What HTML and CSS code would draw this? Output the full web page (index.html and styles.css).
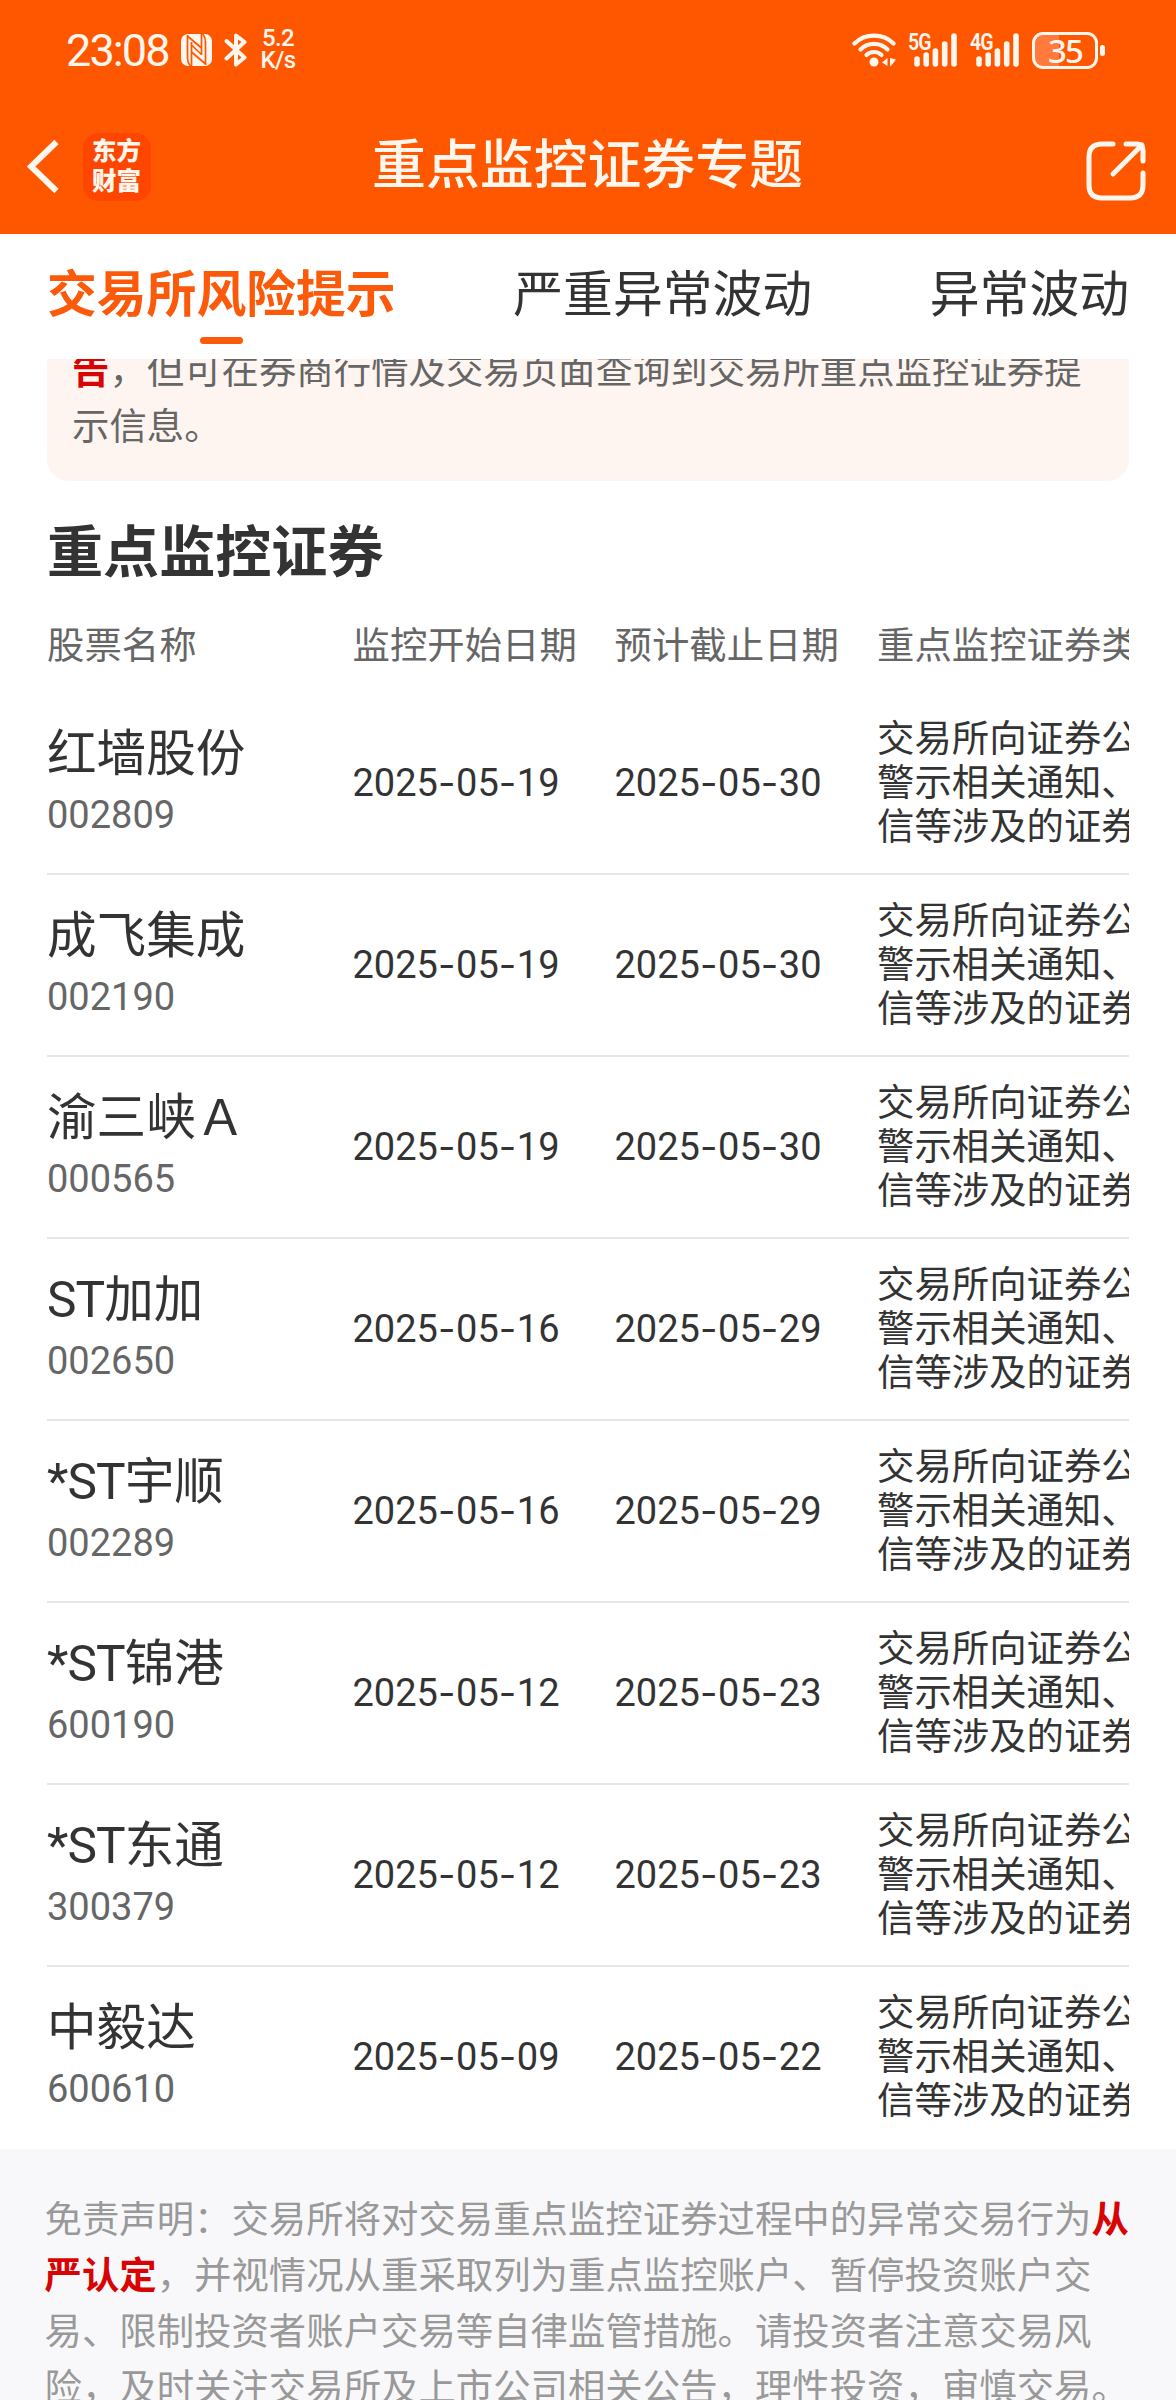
FILE: index.html
```html
<!DOCTYPE html>
<html lang="zh-CN">
<head>
<meta charset="utf-8">
<title>重点监控证券专题</title>
<link rel="stylesheet" href="styles.css">
</head>
<body>
<div class="screen">
  <header class="top">
    <div class="status">
      <span class="clock">23:08</span>
      <svg class="nfc" width="31" height="34" viewBox="0 0 31 34"><rect x="0" y="1" width="31" height="32" rx="7" fill="#fff7ee"/><path d="M6.500 2V25Q6.500 30 10 34M24.500 32V9Q24.500 4 21 0M10.500 9V33M20.500 1V22M7 3.500L20.500 15M10.500 12L20.500 21.500M10.500 19L24 30.500" stroke="#ff5600" stroke-width="1.700" fill="none"/></svg>
      <svg class="bt" width="24" height="36" viewBox="0 0 24 36"><path d="M2.500 9L20.500 25.500L12 32.500V22M12 14V3.500L20.500 10L2.500 26.500" fill="none" stroke="#fff7ee" stroke-width="4" stroke-linejoin="round" stroke-linecap="round"/></svg>
      <span class="speed"><span>5.2</span><span>K/s</span></span>
      <span class="gap"></span>
      <svg class="wifi" width="45" height="36" viewBox="0 0 45 36"><g fill="none" stroke="#fff7ee" stroke-width="4.200" stroke-linecap="round"><path d="M2.500 11.500C13 1 31 1 41.500 11.500"/><path d="M8.500 17.500C16 10 28 10 35.500 17.500"/><path d="M14.500 23C18.500 19 25.500 19 29.500 23"/></g><circle cx="22" cy="30" r="4.500" fill="#fff7ee"/><path d="M35.500 26v8l-5.500-3.500zM38 26l6 1.500-5 6.500h-1z" fill="#fff7ee"/></svg>
      <span class="signal"><span class="net">5G</span><svg width="44" height="36" viewBox="0 0 44 36"><path d="M3 27v5M12.200 23v9M21.400 19v13M30.700 12v20M40 4v28" stroke="#fff7ee" stroke-width="5.600" stroke-linecap="round"/></svg></span>
      <span class="signal second"><span class="net">4G</span><svg width="44" height="36" viewBox="0 0 44 36"><path d="M3 27v5M12.200 23v9M21.400 19v13M30.700 12v20M40 4v28" stroke="#fff7ee" stroke-width="5.600" stroke-linecap="round"/></svg></span>
      <span class="battery">35</span><span class="cap"></span>
    </div>
    <div class="nav">
      <svg class="back" width="32" height="56" viewBox="0 0 32 56"><path d="M29.500 3L4 27.500L29.500 52" fill="none" stroke="#fff7ee" stroke-width="6"/></svg>
      <span class="logo">东方<br>财富</span>
      <h1>重点监控证券专题</h1>
      <svg class="share" width="60" height="60" viewBox="0 0 60 60"><path d="M27 3H16Q3 3 3 16V44Q3 57 16 57H44Q57 57 57 44V32M40 3H51Q57 3 57 9V20M56 4L27 33" fill="none" stroke="#fff7ee" stroke-width="5" stroke-linecap="round"/></svg>
    </div>
  </header>
  <nav class="tabs">
    <span class="tab on">交易所风险提示</span><span class="tab">严重异常波动</span><span class="tab">异常波动</span>
  </nav>
  <div class="notice"><p><b>告</b>，但可在券商行情及交易页面查询到交易所重点监控证券提示信息。</p></div>
  <h2>重点监控证券</h2>
  <div class="table">
    <div class="row head"><span>股票名称</span><span>监控开始日期</span><span>预计截止日期</span><span>重点监控证券类型</span></div>
    <div class="row"><div class="stock"><span class="name">红墙股份</span><span class="code">002809</span></div><span class="date">2025<i>-</i>05<i>-</i>19</span><span class="date">2025<i>-</i>05<i>-</i>30</span><p class="kind">交易所向证券公司<br>警示相关通知、<br>信等涉及的证券</p></div>
    <div class="row"><div class="stock"><span class="name">成飞集成</span><span class="code">002190</span></div><span class="date">2025<i>-</i>05<i>-</i>19</span><span class="date">2025<i>-</i>05<i>-</i>30</span><p class="kind">交易所向证券公司<br>警示相关通知、<br>信等涉及的证券</p></div>
    <div class="row"><div class="stock"><span class="name">渝三峡Ａ</span><span class="code">000565</span></div><span class="date">2025<i>-</i>05<i>-</i>19</span><span class="date">2025<i>-</i>05<i>-</i>30</span><p class="kind">交易所向证券公司<br>警示相关通知、<br>信等涉及的证券</p></div>
    <div class="row"><div class="stock"><span class="name"><em>ST</em>加加</span><span class="code">002650</span></div><span class="date">2025<i>-</i>05<i>-</i>16</span><span class="date">2025<i>-</i>05<i>-</i>29</span><p class="kind">交易所向证券公司<br>警示相关通知、<br>信等涉及的证券</p></div>
    <div class="row"><div class="stock"><span class="name"><em>*ST</em>宇顺</span><span class="code">002289</span></div><span class="date">2025<i>-</i>05<i>-</i>16</span><span class="date">2025<i>-</i>05<i>-</i>29</span><p class="kind">交易所向证券公司<br>警示相关通知、<br>信等涉及的证券</p></div>
    <div class="row"><div class="stock"><span class="name"><em>*ST</em>锦港</span><span class="code">600190</span></div><span class="date">2025<i>-</i>05<i>-</i>12</span><span class="date">2025<i>-</i>05<i>-</i>23</span><p class="kind">交易所向证券公司<br>警示相关通知、<br>信等涉及的证券</p></div>
    <div class="row"><div class="stock"><span class="name"><em>*ST</em>东通</span><span class="code">300379</span></div><span class="date">2025<i>-</i>05<i>-</i>12</span><span class="date">2025<i>-</i>05<i>-</i>23</span><p class="kind">交易所向证券公司<br>警示相关通知、<br>信等涉及的证券</p></div>
    <div class="row"><div class="stock"><span class="name">中毅达</span><span class="code">600610</span></div><span class="date">2025<i>-</i>05<i>-</i>09</span><span class="date">2025<i>-</i>05<i>-</i>22</span><p class="kind">交易所向证券公司<br>警示相关通知、<br>信等涉及的证券</p></div>
  </div>
  <footer class="disclaimer"><p>免责声明：交易所将对交易重点监控证券过程中的异常交易行为<b>从严认定</b>，并视情况从重采取列为重点监控账户、暂停投资账户交易、限制投资者账户交易等自律监管措施。请投资者注意交易风险，及时关注交易所及上市公司相关公告，理性投资，审慎交易。</p></footer>
</div>
</body>
</html>
```
FILE: styles.css
```css
* { box-sizing: border-box; margin: 0; padding: 0; }
body { background: #fff; color: #333; font-family: "Noto Sans CJK SC", sans-serif; }
.screen { width: 1176px; height: 2400px; overflow: hidden; display: flex; flex-direction: column; font-size: 37.4px; }
.screen > * { flex-shrink: 0; }

.top { height: 234px; background: #ff5600; color: #fff7ee; }
.status { height: 100px; padding-left: 66px; display: flex; align-items: center; font-family: Roboto, sans-serif; }
.status > * { flex-shrink: 0; }
.clock { width: 115px; font-size: 45px; letter-spacing: -1.9px; }
.nfc { margin-bottom: 1px; }
.bt { margin-left: 12px; }
.speed { width: 40px; margin: 0 4px 0 10px; padding-bottom: 1px; display: flex; flex-direction: column; align-items: center; font-size: 24px; line-height: 21.5px; font-weight: 500; letter-spacing: -0.7px; }
.gap { width: 550px; }
.signal { width: 50px; height: 36px; margin-left: 11px; display: flex; justify-content: flex-end; position: relative; }
.second { margin-left: 12px; }
.net { position: absolute; left: 0; top: -1px; font-size: 23px; line-height: 23px; font-weight: 600; letter-spacing: -1px; transform: scaleX(0.85); transform-origin: left; }
.battery { width: 66px; height: 37px; margin-left: 12px; border: 3px solid #fff7ee; border-radius: 11px; background: linear-gradient(90deg, #ff7a3c 24px, transparent 24px); font-family: "Noto Sans", sans-serif; font-size: 33px; line-height: 31px; font-weight: 500; text-align: center; letter-spacing: -2px; }
.cap { width: 5px; height: 11px; margin-left: 2px; border-radius: 3px; background: #fff7ee; }
.nav { height: 134px; padding: 0 30px 0 27px; display: flex; align-items: center; }
.logo { width: 68px; height: 68px; margin: 0 0 1px 24px; padding: 2px 0 0 9px; border-radius: 15px; background: #ff4600; font-size: 24.5px; line-height: 30px; font-weight: 900; white-space: nowrap; }
h1 { flex: 1; margin-left: 221px; padding-bottom: 12px; font-size: 53.9px; font-weight: 500; line-height: 80px; white-space: nowrap; }
.share { margin-top: 8px; }

.tabs { height: 125px; padding: 23px 47px 0; display: flex; justify-content: space-between; font-size: 49.8px; line-height: 66px; }
.tab { white-space: nowrap; }
.on { color: #fa5a0a; font-weight: 700; }
.on::after { content: ""; display: block; width: 43px; height: 7px; margin: 14px auto 0; border-radius: 4px; background: #fa5a0a; }

.notice { height: 122px; margin: 0 47px; padding: 0 25px; background: #fff5f0; border-radius: 0 0 22px 22px; color: #666; overflow: hidden; }
.notice p { margin-top: -19px; line-height: 56px; }
b { color: #d80404; font-weight: 700; }
h2 { height: 128px; padding: 27px 47px 0; font-size: 56.1px; line-height: 80px; font-weight: 700; }

.table { margin: 0 47px; overflow: hidden; }
.row { width: 1130px; height: 182px; display: grid; grid-template-columns: 305.5px 262px 262.5px 300px; align-items: center; border-bottom: 2px solid #e6e6e6; white-space: nowrap; }
.row:last-child { border-bottom-color: transparent; }
.head { height: 84px; padding-bottom: 16px; border: 0; color: #666; }
.stock { display: flex; flex-direction: column; }
.name { padding-bottom: 2px; font-family: Roboto, "Noto Sans CJK SC", sans-serif; font-size: 49.6px; line-height: 62px; }
.name em { font-style: normal; letter-spacing: -0.9px; }
.code { font-family: Roboto, sans-serif; font-size: 38px; line-height: 56px; color: #666; }
.date { padding-bottom: 3px; font-family: Roboto, sans-serif; font-size: 38px; }
.date i { font-family: Inter, sans-serif; font-style: normal; letter-spacing: 0.6px; }
.kind { padding-bottom: 7px; line-height: 44px; }
.disclaimer { height: 251px; padding: 40px 40px 0 44.5px; background: #f8f8fb; color: #999; overflow: hidden; }
.disclaimer p { line-height: 56px; }
```
